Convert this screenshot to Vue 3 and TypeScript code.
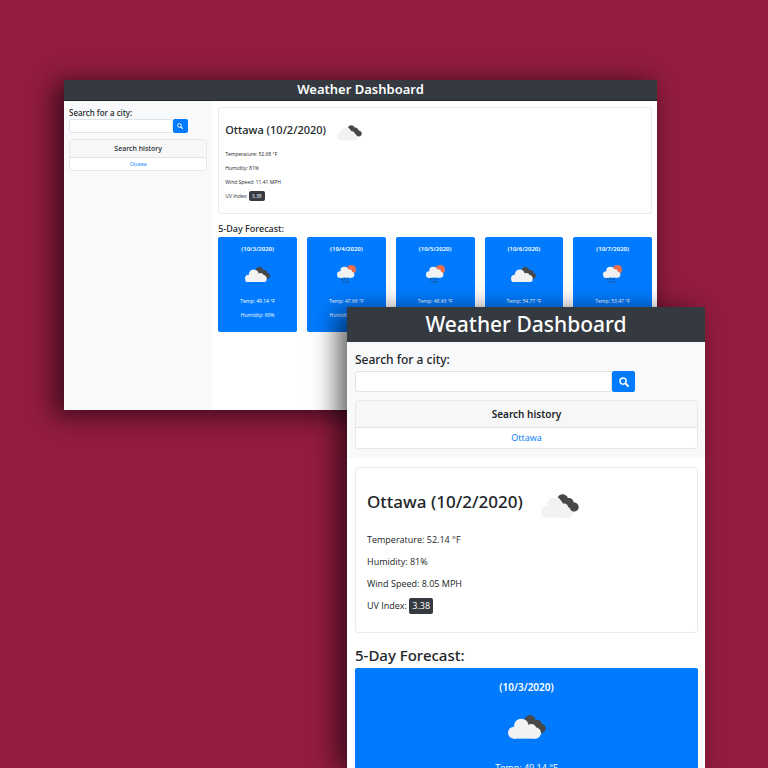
<script setup lang="ts">
type Sky = 'clouds' | 'rain'

interface Day {
  date: string
  sky: Sky
  temp: string
  humidity?: string
}

interface Screen {
  id: string
  temperature: string
  wind: string
  days: Day[]
}

const days: Day[] = [
  { date: '(10/3/2020)', sky: 'clouds', temp: '49.14', humidity: '60' },
  { date: '(10/4/2020)', sky: 'rain', temp: '47.66', humidity: '60' },
  { date: '(10/5/2020)', sky: 'rain', temp: '48.43' },
  { date: '(10/6/2020)', sky: 'clouds', temp: '54.77' },
  { date: '(10/7/2020)', sky: 'rain', temp: '53.47' },
]

const screens: Screen[] = [
  { id: 'wide', temperature: '52.68', wind: '11.41', days },
  { id: 'narrow', temperature: '52.14', wind: '8.05', days: days.slice(0, 1) },
]
</script>

<template>
  <main class="stage">
    <section v-for="screen in screens" :key="screen.id" class="window" :class="screen.id">
      <header class="topbar"><h1>Weather Dashboard</h1></header>
      <div class="body">
        <aside class="sidebar">
          <form class="search" @submit.prevent>
            <label :for="`city-${screen.id}`">Search for a city:</label>
            <div class="search-row">
              <input :id="`city-${screen.id}`" type="text" />
              <button type="submit" aria-label="Search">
                <svg viewBox="0 0 16 16">
                  <circle cx="6.5" cy="6.5" r="4.9" fill="none" stroke="#fff" stroke-width="2.4" />
                  <path d="M10.3 10.3L14.4 14.4" stroke="#fff" stroke-width="3" stroke-linecap="round" />
                </svg>
              </button>
            </div>
          </form>
          <div class="history">
            <h2>Search history</h2>
            <a href="#">Ottawa</a>
          </div>
        </aside>

        <div class="content">
          <article class="current">
            <div class="place">
              <h2>Ottawa (10/2/2020)</h2>
              <svg class="clouds" viewBox="0 0 114 72">
                <g fill="#f2f2f2">
                  <circle cx="18" cy="53" r="18" />
                  <circle cx="40" cy="33" r="22" />
                  <circle cx="70" cy="42" r="15" />
                  <circle cx="80" cy="54" r="17" />
                  <path d="M18 40H80V71H18Z" />
                </g>
                <path
                  fill="#484848"
                  d="M50 10C56 -2 74 -3 81 12C90 10 97 17 98 25C108 26 114 32 113 41C112 52 98 57 89 48C87 43 85 41 82 40C80 32 74 27 66 29C62 22 57 15 50 10Z"
                />
              </svg>
            </div>
            <p>Temperature: {{ screen.temperature }} °F</p>
            <p>Humidity: 81%</p>
            <p>Wind Speed: {{ screen.wind }} MPH</p>
            <p>UV Index: <span class="badge">3.38</span></p>
          </article>

          <h2 class="forecast-title">5-Day Forecast:</h2>
          <div class="forecast">
            <article v-for="day in screen.days" :key="day.date" class="day">
              <h3>{{ day.date }}</h3>
              <div class="sky">
                <svg v-if="day.sky === 'clouds'" class="clouds" viewBox="0 0 114 72">
                  <g fill="#484848">
                    <circle cx="66" cy="17" r="17" />
                    <circle cx="88" cy="27" r="13" />
                    <circle cx="99" cy="40" r="14" />
                    <path d="M58 20L80 14L108 32L92 54Z" />
                  </g>
                  <g fill="#f2f2f2">
                    <circle cx="18" cy="53" r="18" />
                    <circle cx="40" cy="33" r="22" />
                    <circle cx="70" cy="42" r="15" />
                    <circle cx="82" cy="54" r="17" />
                    <path d="M18 40H82V71H18Z" />
                  </g>
                </svg>
                <svg v-else class="rain" viewBox="0 0 57 56">
                  <circle cx="43" cy="14" r="14" fill="#ec6e4c" />
                  <g fill="#f2f2f2">
                    <circle cx="10" cy="29" r="10" />
                    <circle cx="22" cy="17" r="12" />
                    <circle cx="37" cy="21" r="8" />
                    <circle cx="43" cy="29" r="9" />
                    <path d="M10 22H43V38H10Z" />
                  </g>
                  <path
                    d="M15 43L14 45M23 40L22 42M32 43L31 45M19 50L18 52M27 49L26 51M34 51L33 53"
                    stroke="#33383d"
                    stroke-width="3"
                    stroke-linecap="round"
                  />
                </svg>
              </div>
              <p>Temp: {{ day.temp }} °F</p>
              <p v-if="day.humidity">Humidity: {{ day.humidity }}%</p>
            </article>
          </div>
        </div>
      </div>
    </section>
  </main>
</template>

<style>
body {
  margin: 0;
}
</style>

<style scoped>
* {
  box-sizing: border-box;
}

h1,
h2,
h3,
p {
  margin: 0;
  font-weight: 500;
}

.stage {
  position: relative;
  height: 100vh;
  overflow: hidden;
  background: #931c40;
  color: #212529;
  font-family: 'Noto Sans', 'Open Sans', sans-serif;
}

.window {
  position: absolute;
  display: flex;
  flex-direction: column;
  overflow: hidden;
  background: #fff;
}

.wide {
  --text: 5px;
  --line: 14px;
  --label: 8px;
  --heading: 11px;
  --cloud: 25px;
  --rain: 19px;
  top: 80px;
  left: 64px;
  right: 111px;
  height: 330px;
  box-shadow: -8px 4px 24px 2px rgba(0, 0, 0, 0.6);
}

.narrow {
  --text: 9px;
  --line: 22px;
  --label: 12px;
  --heading: 17px;
  --cloud: 38px;
  --rain: 30px;
  top: 307px;
  left: 347px;
  right: 63px;
  bottom: 0;
  box-shadow: -10px 4px 24px 0 rgba(0, 0, 0, 0.6);
}

.topbar {
  flex: none;
  display: flex;
  align-items: center;
  justify-content: center;
  background: #343a40;
  color: #fff;
}

.wide .topbar {
  height: 21px;
  padding-bottom: 2px;
  border-bottom: 1px solid #1c232b;
}

.narrow .topbar {
  height: 35px;
  padding-bottom: 2px;
}

.wide h1 {
  font-size: 13px;
  font-weight: 600;
  line-height: 18px;
}

.narrow h1 {
  font-size: 21px;
  line-height: 28px;
}

.body {
  flex: 1;
  display: flex;
}

.narrow .body {
  flex-direction: column;
}

.sidebar {
  flex: none;
  background: #f8f9fa;
}

.wide .sidebar {
  width: 25%;
  padding: 6px 5px;
}

.narrow .sidebar {
  padding: 9px 7px 9px 8px;
}

label {
  display: block;
  font-size: var(--label);
  font-weight: 500;
}

.wide label {
  line-height: 12px;
}

.narrow label {
  padding-bottom: 2px;
  line-height: 18px;
}

.search-row {
  display: flex;
}

.search input {
  flex: none;
  min-width: 0;
  width: 75%;
  padding: 0 4px;
  border: 1px solid #dfe3e7;
  border-radius: 3px;
  background: #fff;
  font: inherit;
  font-size: var(--text);
}

.search button {
  display: flex;
  align-items: center;
  justify-content: center;
  padding: 0;
  border: 0;
  border-radius: 2px;
  background: #007bff;
}

.wide .search input,
.wide .search button {
  height: 14px;
}

.wide .search button {
  width: 15px;
}

.wide .search button svg {
  width: 6px;
}

.narrow .search input,
.narrow .search button {
  height: 21px;
}

.narrow .search button {
  width: 23px;
}

.narrow .search button svg {
  width: 10px;
}

.history {
  border: 1px solid #e6e8ea;
  border-radius: 3px;
  background: #fff;
  text-align: center;
}

.wide .history {
  margin-top: 6px;
}

.narrow .history {
  margin-top: 8px;
}

.history h2 {
  border-bottom: 1px solid #e2e4e6;
  background: #f7f7f7;
}

.wide .history h2 {
  font-size: 7px;
  line-height: 17px;
}

.narrow .history h2 {
  font-size: 10px;
  font-weight: 600;
  line-height: 26px;
}

.history a {
  display: block;
  color: #007bff;
  font-family: 'Open Sans', 'Noto Sans', sans-serif;
  font-size: var(--text);
  text-decoration: none;
}

.wide .history a {
  line-height: 12px;
}

.narrow .history a {
  line-height: 20px;
}

.content {
  flex: 1;
  min-width: 0;
}

.wide .content {
  padding: 6px 5px 0 6px;
}

.narrow .content {
  padding: 9px 7px 0 8px;
}

.current {
  border: 1px solid #ebebeb;
  border-radius: 3px;
}

.wide .current {
  height: 107px;
  padding: 12px 6px 0;
}

.narrow .current {
  height: 166px;
  padding: 17px 11px 0;
}

.place {
  display: flex;
  align-items: center;
}

.wide .place {
  gap: 11px;
  height: 26px;
  margin-bottom: 1px;
}

.narrow .place {
  gap: 18px;
  height: 41px;
  margin-bottom: 3px;
}

.place h2 {
  font-size: var(--heading);
}

.wide .place h2 {
  padding-bottom: 7px;
}

.narrow .place h2 {
  padding-bottom: 9px;
}

.clouds {
  display: block;
  width: var(--cloud);
}

.rain {
  display: block;
  width: var(--rain);
}

p {
  font-family: 'Open Sans', 'Noto Sans', sans-serif;
  font-size: var(--text);
  font-weight: 400;
  line-height: var(--line);
}

.badge {
  display: inline-block;
  padding: 0 3px;
  border-radius: 2px;
  background: #343a40;
  color: #fff;
}

.wide .badge {
  line-height: 10px;
}

.narrow .badge {
  line-height: 16px;
}

.wide .forecast-title {
  padding: 7px 0 1px;
  font-size: 9px;
  line-height: 15px;
}

.narrow .forecast-title {
  padding: 11px 0 1px;
  font-size: 15px;
  line-height: 23px;
}

.forecast {
  display: grid;
}

.wide .forecast {
  grid-template-columns: repeat(5, 1fr);
  gap: 10px;
}

.narrow .forecast {
  gap: 16px;
}

.day {
  border-radius: 2px;
  background: #007bff;
  color: #fff;
  text-align: center;
}

.wide .day {
  padding: 6px 0 10px;
}

.narrow .day {
  padding: 10px 0 16px;
}

h3 {
  font-weight: 600;
}

.wide h3 {
  font-size: 6px;
  line-height: 12px;
}

.narrow h3 {
  font-size: 10px;
  line-height: 18px;
}

.sky {
  display: flex;
  align-items: center;
  justify-content: center;
}

.wide .sky {
  height: 39px;
}

.narrow .sky {
  height: 61px;
}
</style>
